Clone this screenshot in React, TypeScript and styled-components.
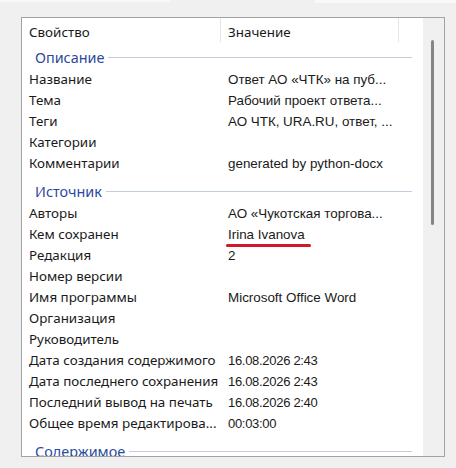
import React from "react";
import styled, { createGlobalStyle } from "styled-components";

const GlobalStyle = createGlobalStyle`
  html, body {
    margin: 0;
    padding: 0;
    background: #f0f0f0;
  }
  body {
    font-family: "Noto Sans", "Open Sans", sans-serif;
    color: #1a1a1a;
  }
`;

const Page = styled.div`
  position: relative;
  width: 456px;
  height: 468px;
  box-sizing: border-box;
  padding: 17px 11px 11px 21px;
  overflow: hidden;
`;

const TopEdge = styled.div`
  position: absolute;
  top: 0;
  left: 0;
  right: 0;
  display: flex;
  justify-content: space-between;
`;

const EdgePiece = styled.div<{ $w: number; $h: number }>`
  width: ${(p) => p.$w}px;
  height: ${(p) => p.$h}px;
  background: #f9f9f9;
`;

const Panel = styled.div`
  width: 424px;
  height: 440px;
  box-sizing: border-box;
  border: 1px solid #a3a3a3;
  background: #fff;
  display: flex;
  overflow: hidden;
`;

const List = styled.div`
  width: 401px;
  display: flex;
  flex-direction: column;
  overflow: hidden;
`;

const Header = styled.div`
  display: grid;
  grid-template-columns: 199px 178px 1fr;
  height: 24px;
  flex: none;
`;

const HeaderCell = styled.div<{ $divider?: boolean }>`
  font-size: 13.4px;
  line-height: 18px;
  padding: 5px 0 0 7px;
  white-space: nowrap;
  border-right: ${(p) => (p.$divider ? "1px solid #e5e5e5" : "none")};
`;

const Group = styled.div<{ $first?: boolean }>`
  display: flex;
  align-items: center;
  height: ${(p) => (p.$first ? 27 : 29)}px;
  padding: ${(p) => (p.$first ? "4px" : "6px")} 11px 0 13px;
  box-sizing: border-box;
  flex: none;
`;

const GroupTitle = styled.span`
  font-size: 14.4px;
  line-height: 18px;
  color: #2a4a9c;
  white-space: nowrap;
`;

const GroupLine = styled.div`
  flex: 1;
  height: 1px;
  margin-left: 4px;
  background: #c3cedd;
`;

const Row = styled.div`
  display: grid;
  grid-template-columns: 199px 178px;
  height: 21px;
  line-height: 21px;
  flex: none;
`;

const Name = styled.div`
  font-size: 13.4px;
  padding-left: 7px;
  white-space: nowrap;
  overflow: hidden;
`;

const Value = styled.div<{ $numeric?: boolean }>`
  font-family: "Liberation Sans", Arial, sans-serif;
  font-size: ${(p) => (p.$numeric ? "13px" : "13.4px")};
  letter-spacing: ${(p) => (p.$numeric ? "-0.3px" : "0")};
  padding-left: 7px;
  white-space: nowrap;
`;

const Marked = styled.span`
  position: relative;
  &::after {
    content: "";
    position: absolute;
    left: -2px;
    right: -6px;
    bottom: -5px;
    height: 3.5px;
    border-radius: 2px;
    background: #d01a2a;
  }
`;

const Scrollbar = styled.div`
  width: 21px;
  background: #f0f0f0;
  padding: 22px 0 0 8px;
  box-sizing: border-box;
`;

const Thumb = styled.div`
  width: 3px;
  height: 185px;
  border-radius: 2px;
  background: #858585;
`;

type Item = { name: string; value?: string; numeric?: boolean; marked?: boolean };

const description: Item[] = [
  { name: "Название", value: "Ответ АО «ЧТК» на пуб..." },
  { name: "Тема", value: "Рабочий проект ответа..." },
  { name: "Теги", value: "АО ЧТК, URA.RU, ответ, ..." },
  { name: "Категории" },
  { name: "Комментарии", value: "generated by python-docx" },
];

const source: Item[] = [
  { name: "Авторы", value: "АО «Чукотская торгова..." },
  { name: "Кем сохранен", value: "Irina Ivanova", marked: true },
  { name: "Редакция", value: "2" },
  { name: "Номер версии" },
  { name: "Имя программы", value: "Microsoft Office Word" },
  { name: "Организация" },
  { name: "Руководитель" },
  { name: "Дата создания содержимого", value: "16.08.2026 2:43", numeric: true },
  { name: "Дата последнего сохранения", value: "16.08.2026 2:43", numeric: true },
  { name: "Последний вывод на печать", value: "16.08.2026 2:40", numeric: true },
  { name: "Общее время редактирова...", value: "00:03:00", numeric: true },
];

const Rows: React.FC<{ items: Item[] }> = ({ items }) => (
  <>
    {items.map((it) => (
      <Row key={it.name}>
        <Name>{it.name}</Name>
        <Value $numeric={it.numeric}>
          {it.marked ? <Marked>{it.value}</Marked> : it.value}
        </Value>
      </Row>
    ))}
  </>
);

export default function App() {
  return (
    <>
      <GlobalStyle />
      <Page>
        <TopEdge>
          <EdgePiece $w={170} $h={2} />
          <EdgePiece $w={141} $h={3} />
        </TopEdge>
        <Panel>
          <List>
            <Header>
              <HeaderCell $divider>Свойство</HeaderCell>
              <HeaderCell $divider>Значение</HeaderCell>
              <HeaderCell />
            </Header>
            <Group $first>
              <GroupTitle>Описание</GroupTitle>
              <GroupLine />
            </Group>
            <Rows items={description} />
            <Group>
              <GroupTitle>Источник</GroupTitle>
              <GroupLine />
            </Group>
            <Rows items={source} />
            <Group>
              <GroupTitle>Содержимое</GroupTitle>
              <GroupLine />
            </Group>
          </List>
          <Scrollbar>
            <Thumb />
          </Scrollbar>
        </Panel>
      </Page>
    </>
  );
}
